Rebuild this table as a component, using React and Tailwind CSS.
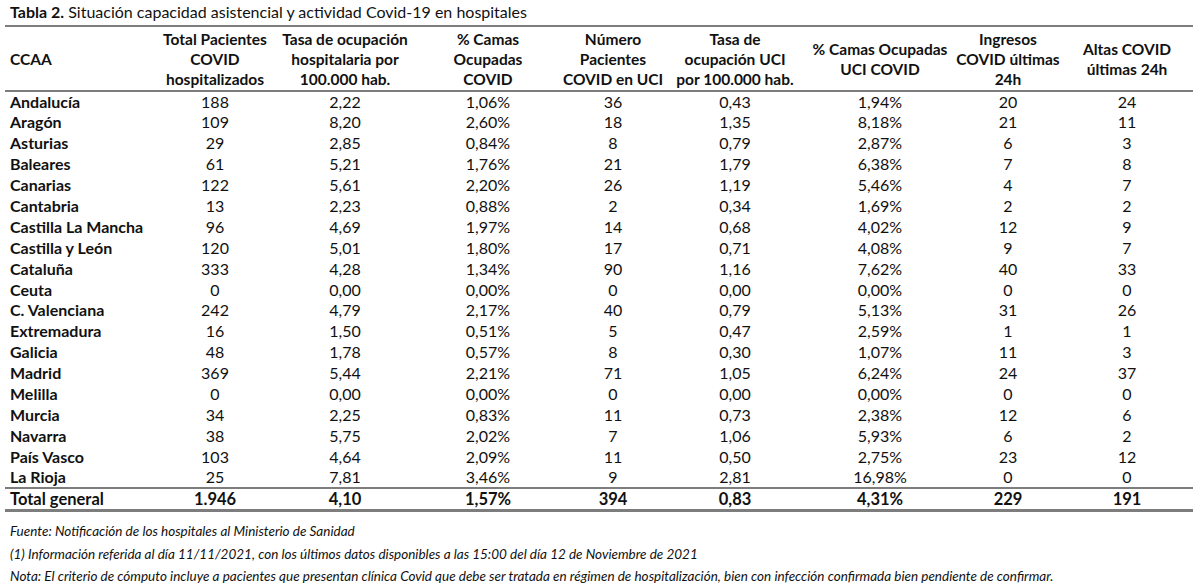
import React from "react";

const rows = [
  ["Andalucía", "188", "2,22", "1,06%", "36", "0,43", "1,94%", "20", "24"],
  ["Aragón", "109", "8,20", "2,60%", "18", "1,35", "8,18%", "21", "11"],
  ["Asturias", "29", "2,85", "0,84%", "8", "0,79", "2,87%", "6", "3"],
  ["Baleares", "61", "5,21", "1,76%", "21", "1,79", "6,38%", "7", "8"],
  ["Canarias", "122", "5,61", "2,20%", "26", "1,19", "5,46%", "4", "7"],
  ["Cantabria", "13", "2,23", "0,88%", "2", "0,34", "1,69%", "2", "2"],
  ["Castilla La Mancha", "96", "4,69", "1,97%", "14", "0,68", "4,02%", "12", "9"],
  ["Castilla y León", "120", "5,01", "1,80%", "17", "0,71", "4,08%", "9", "7"],
  ["Cataluña", "333", "4,28", "1,34%", "90", "1,16", "7,62%", "40", "33"],
  ["Ceuta", "0", "0,00", "0,00%", "0", "0,00", "0,00%", "0", "0"],
  ["C. Valenciana", "242", "4,79", "2,17%", "40", "0,79", "5,13%", "31", "26"],
  ["Extremadura", "16", "1,50", "0,51%", "5", "0,47", "2,59%", "1", "1"],
  ["Galicia", "48", "1,78", "0,57%", "8", "0,30", "1,07%", "11", "3"],
  ["Madrid", "369", "5,44", "2,21%", "71", "1,05", "6,24%", "24", "37"],
  ["Melilla", "0", "0,00", "0,00%", "0", "0,00", "0,00%", "0", "0"],
  ["Murcia", "34", "2,25", "0,83%", "11", "0,73", "2,38%", "12", "6"],
  ["Navarra", "38", "5,75", "2,02%", "7", "1,06", "5,93%", "6", "2"],
  ["País Vasco", "103", "4,64", "2,09%", "11", "0,50", "2,75%", "23", "12"],
  ["La Rioja", "25", "7,81", "3,46%", "9", "2,81", "16,98%", "0", "0"],
];

const total = ["Total general", "1.946", "4,10", "1,57%", "394", "0,83", "4,31%", "229", "191"];

// column widths match the reference grid
const widths = ["w-[150px]", "w-[120px]", "w-[140px]", "w-[146px]", "w-[104px]", "w-[140px]", "w-[150px]", "w-[106px]", "w-[132px]"];

const headers = [
  "CCAA",
  <>Total Pacientes<br />COVID<br />hospitalizados</>,
  <>Tasa de ocupación<br />hospitalaria por<br />100.000 hab.</>,
  <>% Camas<br />Ocupadas<br />COVID</>,
  <>Número<br />Pacientes<br />COVID en UCI</>,
  <>Tasa de<br />ocupación UCI<br />por 100.000 hab.</>,
  <>% Camas Ocupadas<br />UCI COVID</>,
  <>Ingresos<br />COVID últimas<br />24h</>,
  <>Altas COVID<br />últimas 24h</>,
];

const App = () => {
  return (
    <div className="w-[1200px] h-[584px] bg-white text-[#111] font-['Lato',sans-serif] overflow-hidden">
      {/* Title */}
      <div className="px-[10px] pt-[2px] h-[25px] text-[16px] leading-[20px]">
        <span className="font-bold">Tabla 2.</span> Situación capacidad asistencial y actividad Covid-19 en hospitales
      </div>

      {/* Table */}
      <table className="ml-[5px] w-[1188px] table-fixed border-collapse text-[16px]">
        <colgroup>
          {widths.map((w, i) => (
            <col key={i} className={w} />
          ))}
        </colgroup>
        <thead>
          <tr className="border-t-2 border-b-2 border-[#7d7d7d]">
            {headers.map((h, i) => (
              <th
                key={i}
                className={`h-[65px] font-bold text-[15.5px] leading-[20px] align-middle ${i === 0 ? "text-left pl-[5px]" : "text-center"}`}
              >
                {h}
              </th>
            ))}
          </tr>
        </thead>
        <tbody>
          {rows.map((row, index) => (
            <tr key={index} className="h-[20.9px]">
              {row.map((cell, i) => (
                <td
                  key={i}
                  className={`leading-[20px] p-0 ${i === 0 ? "text-left pl-[5px] font-bold" : "text-center"}`}
                >
                  {cell}
                </td>
              ))}
            </tr>
          ))}
          <tr className="h-[22px] border-t-2 border-b-[3px] border-[#7d7d7d]">
            {total.map((cell, i) => (
              <td
                key={i}
                className={`font-bold text-[16.5px] leading-[20px] p-0 ${i === 0 ? "text-left pl-[5px]" : "text-center"}`}
              >
                {cell}
              </td>
            ))}
          </tr>
        </tbody>
      </table>

      {/* Notes */}
      <div className="px-[10px] pt-[8px] italic text-[13.5px] leading-[22.5px]">
        <p>Fuente: Notificación de los hospitales al Ministerio de Sanidad</p>
        <p>(1) Información referida al día 11/11/2021, con los últimos datos disponibles a las 15:00 del día 12 de Noviembre de 2021</p>
        <p>Nota: El criterio de cómputo incluye a pacientes que presentan clínica Covid que debe ser tratada en régimen de hospitalización, bien con infección confirmada bien pendiente de confirmar.</p>
      </div>
    </div>
  );
};

export default App;
